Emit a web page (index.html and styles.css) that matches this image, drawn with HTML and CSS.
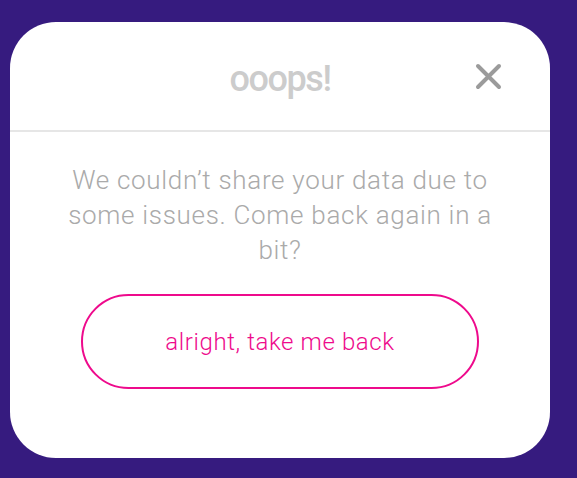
FILE: index.html
```html
<!DOCTYPE html>
<html lang="en">
<head>
  <meta charset="UTF-8" />
  <meta name="viewport" content="width=device-width, initial-scale=1.0" />
  <title>ooops!</title>
  <link rel="stylesheet" href="styles.css">
</head>
<body>
  <div class="modal">
    <div class="modal-header">
      <span></span>
      <h1>ooops!</h1>
      <button class="close-btn" aria-label="Close">
        <svg width="27" height="27" viewBox="0 0 27 27">
          <path d="M3 3 L24 24 M24 3 L3 24" stroke="#9b9b9b" stroke-width="4" stroke-linecap="round" fill="none" />
        </svg>
      </button>
    </div>
    <p class="message">We couldn’t share your data due to some issues. Come back again in a bit?</p>
    <button class="back-btn">alright, take me back</button>
  </div>
</body>
</html>
```

FILE: styles.css
```css
body {
  margin: 0;
  padding: 22px 27px 20px 10px;
  background: #361b7f;
  font-family: "Roboto", sans-serif;
}
.modal {
  height: 436px;
  background: #fff;
  border-radius: 46px;
  display: flex;
  flex-direction: column;
  align-items: center;
}
.modal-header {
  width: 100%;
  height: 108px;
  border-bottom: 2px solid #e6e6e6;
  display: grid;
  grid-template-columns: 1fr auto 1fr;
  align-items: center;
}
.modal-header h1 {
  margin: 0;
  padding-top: 6px;
  font-family: "Roboto", sans-serif;
  font-weight: 500;
  font-size: 36px;
  color: #cccccc;
  letter-spacing: -1.4px;
}
.close-btn {
  justify-self: end;
  margin-right: 48px;
  padding: 0;
  border: none;
  background: none;
  cursor: pointer;
  line-height: 0;
}
.message {
  width: 450px;
  margin: 31px 0 0;
  font-weight: 300;
  font-size: 26px;
  line-height: 35px;
  letter-spacing: 0.7px;
  color: #aaaaaa;
  text-align: center;
}
.back-btn {
  width: 398px;
  height: 95px;
  margin-top: 26px;
  border: 2px solid #ee0a8c;
  border-radius: 48px;
  background: #fff;
  color: #ee0a8c;
  font-family: "Roboto", sans-serif;
  font-weight: 300;
  font-size: 24px;
  letter-spacing: 0.6px;
  cursor: pointer;
}
```
